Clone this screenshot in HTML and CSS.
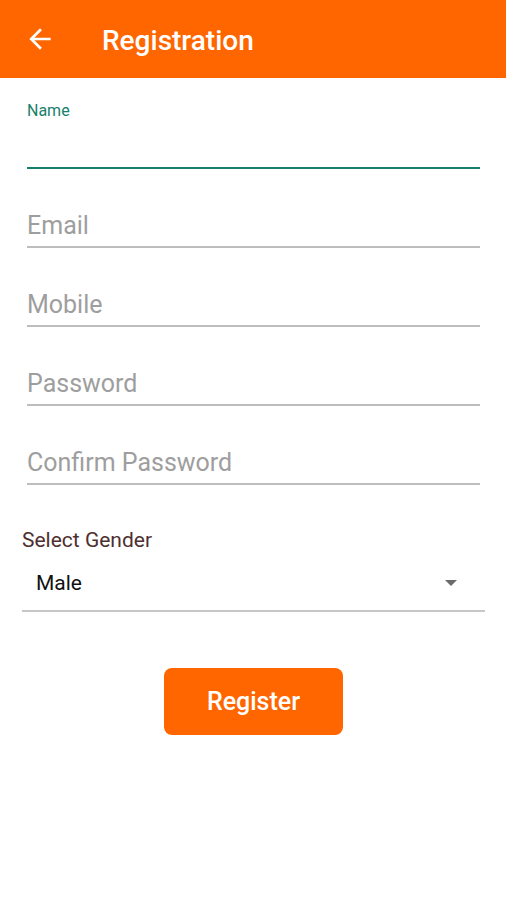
FILE: index.html
```html
<!DOCTYPE html>
<html lang="en">
<head>
    <meta charset="UTF-8">
    <meta name="viewport" content="width=device-width, initial-scale=1.0">
    <title>Registration</title>
    <link rel="stylesheet" href="styles.css">
</head>
<body>
    <div class="toolbar">
        <span class="back">
            <svg width="32" height="32" viewBox="0 0 24 24"><path d="M20 11H7.83l5.59-5.59L12 4l-8 8 8 8 1.41-1.41L7.83 13H20v-2z" fill="#fff"/></svg>
        </span>
        <h1>Registration</h1>
    </div>

    <div class="form">
        <div class="field field-active">
            <label>Name</label>
        </div>
        <div class="field"><span class="hint">Email</span></div>
        <div class="field"><span class="hint">Mobile</span></div>
        <div class="field"><span class="hint">Password</span></div>
        <div class="field"><span class="hint">Confirm Password</span></div>

        <div class="gender">
            <div class="gender-label">Select Gender</div>
            <div class="spinner">
                <span>Male</span>
                <span class="caret"></span>
            </div>
        </div>

        <div class="actions">
            <button class="register">Register</button>
        </div>
    </div>
</body>
</html>
```

FILE: styles.css
```css
body {
    margin: 0;
    font-family: Roboto, "Noto Sans", sans-serif;
    background: #fff;
}
.toolbar {
    height: 78px;
    background: #ff6600;
    display: flex;
    align-items: center;
    padding-left: 24px;
    box-sizing: border-box;
}
.back {
    display: flex;
    width: 32px;
    height: 32px;
}
h1 {
    margin: 3px 0 0 46px;
    color: #fff;
    font-size: 28px;
    font-weight: 500;
}
.field {
    margin: 0 26px 0 27px;
    height: 79px;
    box-sizing: border-box;
    border-bottom: 2px solid #bdbdbd;
    display: flex;
    align-items: flex-end;
    padding-bottom: 5px;
}
.field-active {
    height: 91px;
    border-bottom-color: #17806a;
    align-items: flex-start;
    padding-top: 23px;
}
.field-active label {
    color: #17806a;
    font-size: 16px;
    line-height: 20px;
}
.hint {
    color: #9e9e9e;
    font-size: 25px;
    line-height: 30px;
}
.gender {
    margin: 0 21px 0 22px;
    padding-top: 42px;
}
.gender-label {
    color: #4e2f2f;
    font-size: 21px;
    line-height: 26px;
}
.spinner {
    display: flex;
    align-items: center;
    justify-content: space-between;
    height: 55px;
    padding: 2px 28px 0 14px;
    border-bottom: 2px solid #c6c6c6;
    font-size: 21px;
    color: #111;
}
.caret {
    width: 0;
    height: 0;
    border-left: 6px solid transparent;
    border-right: 6px solid transparent;
    border-top: 6px solid #6b6b6b;
}
.actions {
    display: flex;
    justify-content: center;
    padding-top: 56px;
}
.register {
    width: 179px;
    height: 67px;
    border: none;
    border-radius: 8px;
    background: #ff6600;
    color: #fff;
    font-family: Roboto, sans-serif;
    font-size: 25px;
    font-weight: 500;
    margin-left: 1px;
}
```
